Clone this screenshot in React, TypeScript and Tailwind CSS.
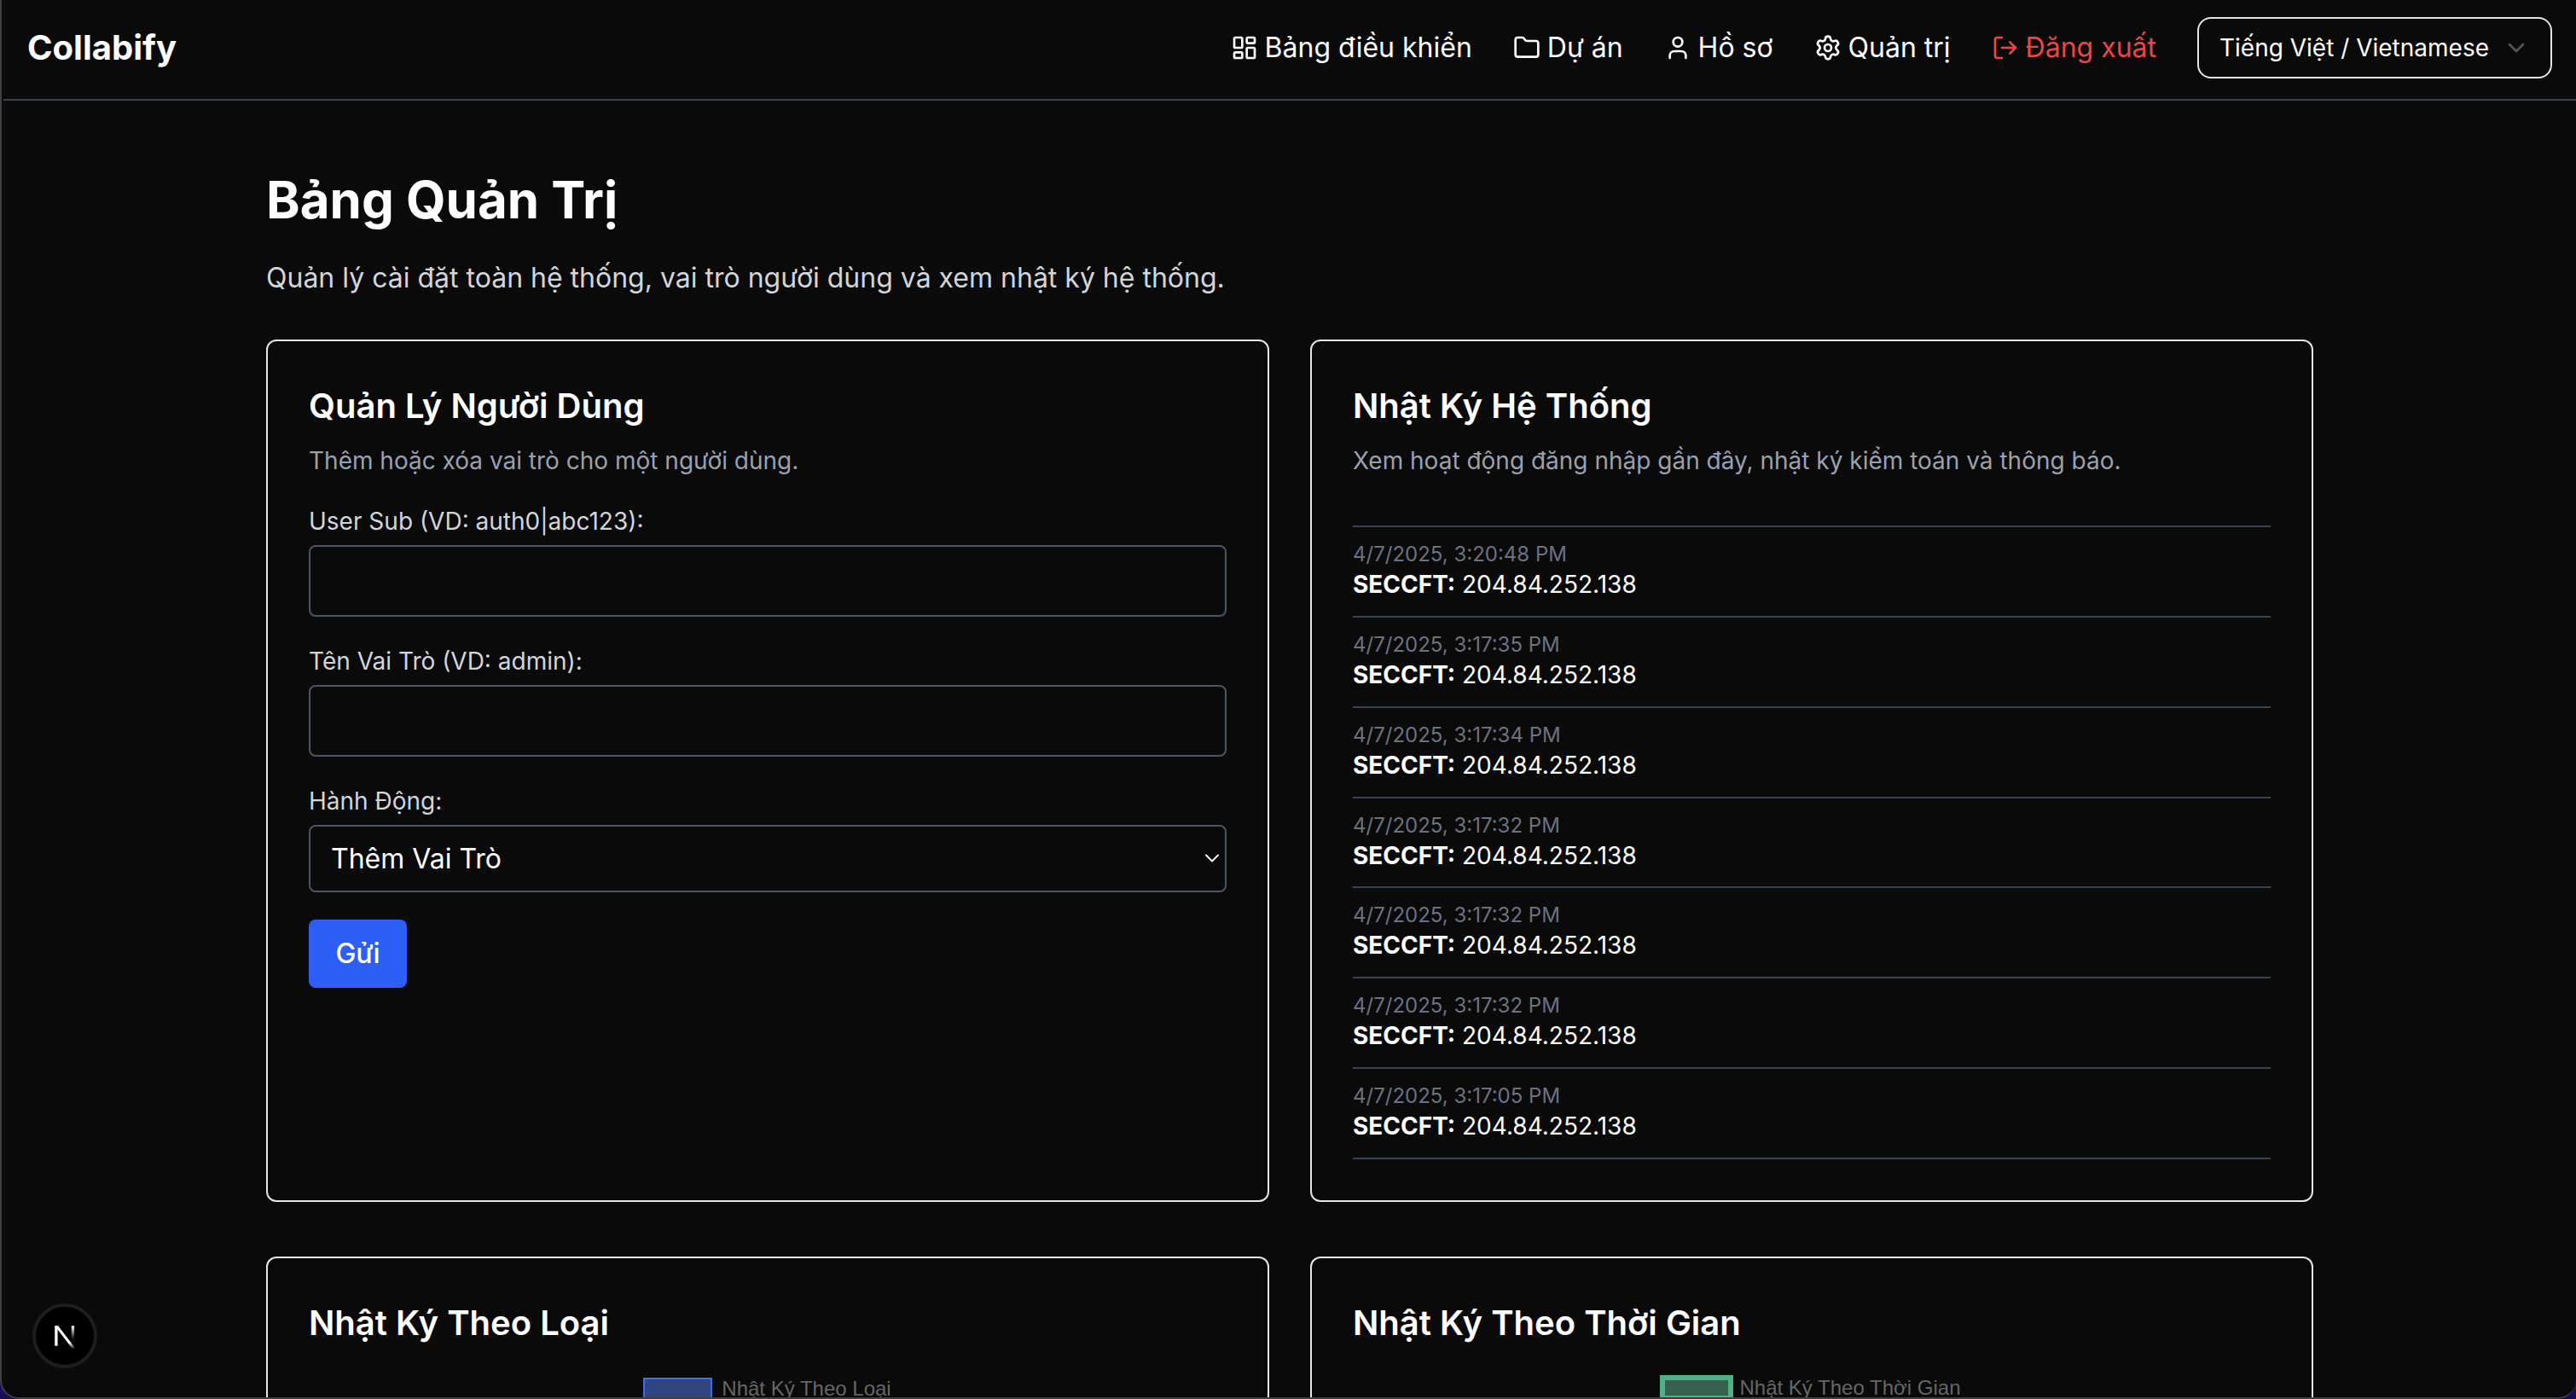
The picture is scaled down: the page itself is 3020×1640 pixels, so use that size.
import React from "react";
import { LayoutDashboard, Folder, User, Settings, LogOut, ChevronDown } from "lucide-react";

const navItems = [
  { label: "Bảng điều khiển", Icon: LayoutDashboard },
  { label: "Dự án", Icon: Folder },
  { label: "Hồ sơ", Icon: User },
  { label: "Quản trị", Icon: Settings },
];

const logs = [
  "4/7/2025, 3:20:48 PM",
  "4/7/2025, 3:17:35 PM",
  "4/7/2025, 3:17:34 PM",
  "4/7/2025, 3:17:32 PM",
  "4/7/2025, 3:17:32 PM",
  "4/7/2025, 3:17:32 PM",
  "4/7/2025, 3:17:05 PM",
];

function Field({ label }: { label: string }) {
  return (
    <div className="mb-[32px] flex flex-col gap-[8px]">
      <label className="text-[28px] leading-[40px] text-gray-300">{label}</label>
      <input
        type="text"
        className="h-[84px] w-full rounded-[8px] border-2 border-gray-600 bg-transparent px-[24px] text-[32px] text-white outline-none"
      />
    </div>
  );
}

function NextBadge() {
  return (
    <div className="absolute bottom-[34px] left-[36px] flex h-[76px] w-[76px] items-center justify-center rounded-full border-[4px] border-[#1e1e1e] bg-black">
      <svg width="29" height="29" viewBox="0 0 26 26" fill="none">
        <defs>
          <linearGradient id="nDiag" x1="6" y1="4" x2="23" y2="26" gradientUnits="userSpaceOnUse">
            <stop offset="0.7" stopColor="#fff" />
            <stop offset="1" stopColor="#fff" stopOpacity="0" />
          </linearGradient>
          <linearGradient id="nBar" x1="21" y1="2" x2="21" y2="16" gradientUnits="userSpaceOnUse">
            <stop offset="0" stopColor="#fff" />
            <stop offset="1" stopColor="#fff" stopOpacity="0" />
          </linearGradient>
        </defs>
        <rect x="2" y="2" width="3" height="21" fill="#fff" />
        <path d="M2 2h3.5L24 26h-3.5z" fill="url(#nDiag)" />
        <rect x="19.5" y="2" width="3" height="14" fill="url(#nBar)" />
      </svg>
    </div>
  );
}

function Card({ title, children, className = "" }: { title: string; children?: React.ReactNode; className?: string }) {
  return (
    <section className={`rounded-[12px] border-2 border-[#e5e5e5] bg-[#0a0a0a] p-[48px] ${className}`}>
      <h2 className="text-[40px] font-semibold leading-[56px] text-white">{title}</h2>
      {children}
    </section>
  );
}

function Legend({ label, box, className }: { label: string; box: string; className: string }) {
  return (
    <div className={className}>
      <span className={box} />
      <span className="text-[24px] leading-[28px] text-[#666666] [font-family:'Liberation_Sans',Arial,sans-serif]">{label}</span>
    </div>
  );
}

export default function App() {
  return (
    <div className="h-[1640px] w-[3020px] overflow-hidden bg-[#1b0d55] [font-family:Inter,'Noto_Sans',sans-serif]">
      <div className="relative h-[1640px] w-[3020px] overflow-hidden rounded-b-[22px] border-b-2 border-l-2 border-[#3f3f3f] bg-[#0a0a0a] pl-[2px]">
        <header className="flex h-[118px] items-center justify-between border-b-2 border-gray-700 px-[28px] pb-[4px]">
          <div className="text-[40px] font-bold leading-[56px] text-white">Collabify</div>
          <nav className="flex items-center gap-[48px]">
            {navItems.map(({ label, Icon }) => (
              <a key={label} className="flex items-center gap-[8px] text-[32px] font-normal leading-[48px] text-white">
                <Icon size={32} />
                {label}
              </a>
            ))}
            <a className="flex items-center gap-[8px] text-[32px] font-normal leading-[48px] text-[#ef4444]">
              <LogOut size={32} />
              Đăng xuất
            </a>
            <button className="flex h-[72px] w-[416px] items-center justify-between rounded-[16px] border-2 border-[#e5e5e5] pl-[24px] pr-[24px] text-[28px] font-normal leading-[40px] text-white">
              Tiếng Việt / Vietnamese
              <ChevronDown size={32} className="opacity-30" />
            </button>
          </nav>
        </header>

        <main className="mx-auto w-[2400px] pt-[80px]">
          <h1 className="text-[60px] font-bold leading-[72px] text-white">Bảng Quản Trị</h1>
          <p className="mb-[48px] mt-[32px] text-[32px] leading-[48px] text-gray-300">
            Quản lý cài đặt toàn hệ thống, vai trò người dùng và xem nhật ký hệ thống.
          </p>

          <div className="grid grid-cols-2 gap-x-[48px] gap-y-[64px]">
            <Card title="Quản Lý Người Dùng">
              <p className="mb-[31px] mt-[16px] text-[28px] leading-[40px] text-gray-400">
                Thêm hoặc xóa vai trò cho một người dùng.
              </p>
              <Field label="User Sub (VD: auth0|abc123):" />
              <Field label="Tên Vai Trò (VD: admin):" />
              <div className="mb-[32px] flex flex-col gap-[8px]">
                <label className="text-[28px] leading-[40px] text-gray-300">Hành Động:</label>
                <div className="relative">
                  <select className="h-[79px] w-full appearance-none rounded-[8px] border-2 border-gray-600 bg-transparent px-[24px] text-[32px] text-white outline-none">
                    <option>Thêm Vai Trò</option>
                    <option>Xóa Vai Trò</option>
                  </select>
                  <ChevronDown size={28} strokeWidth={1.6} className="pointer-events-none absolute right-[3px] top-[25px] text-white" />
                </div>
              </div>
              <button className="h-[80px] w-[115px] rounded-[8px] bg-[#2d5ef5] text-[32px] font-medium text-white">Gửi</button>
            </Card>

            <Card title="Nhật Ký Hệ Thống">
              <p className="mb-[56px] mt-[16px] text-[28px] leading-[40px] text-gray-400">
                Xem hoạt động đăng nhập gần đây, nhật ký kiểm toán và thông báo.
              </p>
              <ul className="border-t-2 border-gray-700">
                {logs.map((d, i) => (
                  <li key={i} className="border-b-2 border-gray-700 pb-[16.86px] pt-[16px]">
                    <div className="text-[24px] leading-[32px] text-gray-500">{d}</div>
                    <div className="text-[28px] leading-[39px] text-white">
                      <strong className="font-bold">SECCFT:</strong> 204.84.252.138
                    </div>
                  </li>
                ))}
              </ul>
            </Card>

            <Card title="Nhật Ký Theo Loại" className="h-[700px]">
              <div className="mt-[35px]">
                <Legend
                  label="Nhật Ký Theo Loại"
                  className="flex items-center justify-center gap-[11px] pr-[1px]"
                  box="h-[26px] w-[81px] border-2 border-[#3f6fe0] bg-[#2f4680]"
                />
              </div>
            </Card>

            <Card title="Nhật Ký Theo Thời Gian" className="h-[700px]">
              <div className="mt-[33px]">
                <Legend
                  label="Nhật Ký Theo Thời Gian"
                  className="flex items-center justify-center gap-[8px] pr-[4px]"
                  box="h-[30px] w-[86px] border-[6px] border-[#4fb286] bg-[#37614f]"
                />
              </div>
            </Card>
          </div>
        </main>

        <NextBadge />
      </div>
    </div>
  );
}
